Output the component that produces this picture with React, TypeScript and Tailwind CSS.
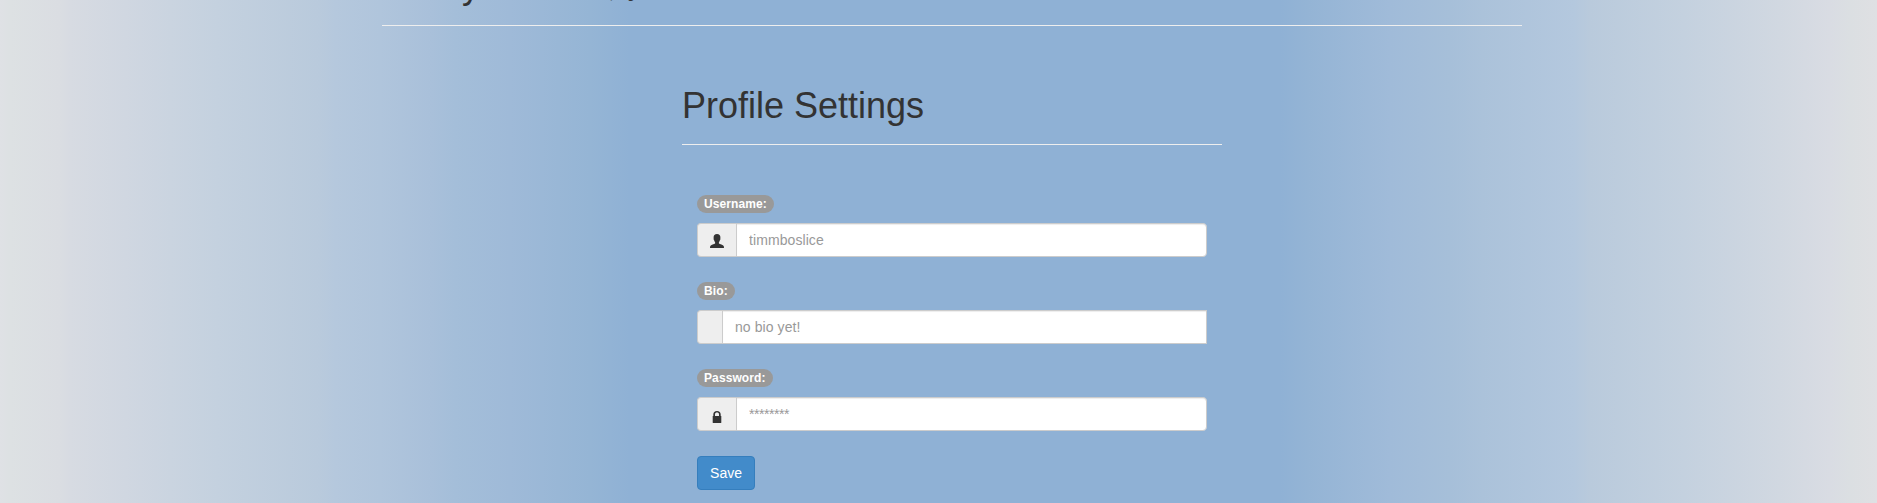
import type { ReactNode } from "react";

const UserGlyph = () => (
  <svg width="14" height="14" viewBox="0 0 14 14" fill="#333" className="block">
    <path d="M7 0C4.700 0 3.600 1.300 3.600 3.200c0 .5.1.9.1 1.300-.3.2-.2 1 .3 1.600.2.900.7 1.700 1.100 2.100v1.300C4.300 10.300.8 10.800.3 12.100c-.2.500-.3 1.200-.3 1.900h14c0-.7-.1-1.400-.3-1.900-.5-1.300-4-1.800-4.800-2.600V8.200c.4-.4.900-1.200 1.100-2.100.5-.6.6-1.400.3-1.600 0-.4.1-.8.100-1.300C10.400 1.300 9.300 0 7 0z" />
  </svg>
);

const LockGlyph = () => (
  <svg width="14" height="14" viewBox="0 0 14 14" fill="#333" className="mt-[2px] block">
    <path fillRule="evenodd" d="M3.300 7V5.500C3.300 3.200 4.700 2 7 2s3.700 1.200 3.700 3.500V7h.6v6.400c0 .3-.3.600-.6.600H3.300c-.3 0-.6-.3-.6-.6V7h.6zm1.700 0h4V5.400C9 4.200 8.200 3.600 7 3.600S5 4.200 5 5.400V7z" />
  </svg>
);

type FieldProps = {
  label: string;
  placeholder: string;
  icon?: ReactNode;
  square?: boolean;
  masked?: boolean;
};

const Field = ({ label, placeholder, icon, square, masked }: FieldProps) => (
  <div className="mb-[25px] flex flex-col items-start">
    <span className="mb-[10px] flex h-[18px] items-center rounded-[10px] bg-[#999] px-[7px] text-[12px] leading-none font-bold tracking-[0.1px] text-white">
      {label}
    </span>
    <div className="flex h-[34px] w-full">
      <span className="flex items-center rounded-l border border-r-0 border-[#ccc] bg-[#eee] px-3 pt-[2px]">
        {icon}
      </span>
      <input
        type="text"
        placeholder={placeholder}
        className={
          "h-full min-w-0 flex-1 border border-[#ccc] bg-white px-3 py-[6px] text-[14px] leading-5 text-[#555] shadow-[inset_0_1px_1px_rgba(0,0,0,0.075)] outline-none placeholder:text-[#999] " +
          (square ? "rounded-none" : "rounded-r") +
          (masked ? " tracking-[-0.45px]" : " tracking-[0.08px]")
        }
      />
    </div>
  </div>
);

export default function App() {
  return (
    <div className="h-[503px] overflow-hidden bg-[linear-gradient(90deg,#dfe1e5_0px,#dde1e3_10px,#dadde2_60px,#d7dbe2_70px,#d0d7e1_125px,#c4d1df_217px,#b9cadc_318px,#b5c8dd_335px,#b0c5dc_380px,#a9c0da_430px,#a4bed9_455px,#9fbad8_510px,#95b5d5_590px,#8fb1d5_630px,#8fb1d5_1280px,#94b4d5_1308px,#a0bbd9_1390px,#a6bfd9_1450px,#abc2da_1482px,#b4c8de_1574px,#b9cadc_1590px,#c4d1df_1684px,#d1d8e1_1780px,#d9dce3_1830px,#dbdfe2_1850px,#dfe0e3_1877px)] pl-[382px] font-['Liberation_Sans',Arial,sans-serif] text-[14px] text-[#333]">
      <div className="flex w-[1140px] flex-col">
        <header className="h-[26px] border-b border-[#eee]">
          <h1 className="-mt-[34px] flex items-baseline pl-[34px] text-[36px] leading-[40px]">
            <span className="w-[193px]">Hey there</span>
            <span className="w-[18px] text-[18px]">,</span>
            <span className="text-[14px]">g</span>
          </h1>
        </header>
        <main className="ml-[300px] w-[540px] pt-[60px]">
          <h2 className="h-[59px] border-b border-[#eee] text-[36px] leading-[40px]">Profile Settings</h2>
          <form className="px-[15px] pt-[50px]">
            <Field label="Username:" placeholder="timmboslice" icon={<UserGlyph />} />
            <Field label="Bio:" placeholder="no bio yet!" square />
            <Field label="Password:" placeholder="********" icon={<LockGlyph />} masked />
            <button
              type="button"
              className="block h-[34px] rounded border border-[#357ebd] bg-[#428bca] px-3 text-[14px] leading-5 tracking-[0.05px] text-white"
            >
              Save
            </button>
          </form>
        </main>
      </div>
    </div>
  );
}
